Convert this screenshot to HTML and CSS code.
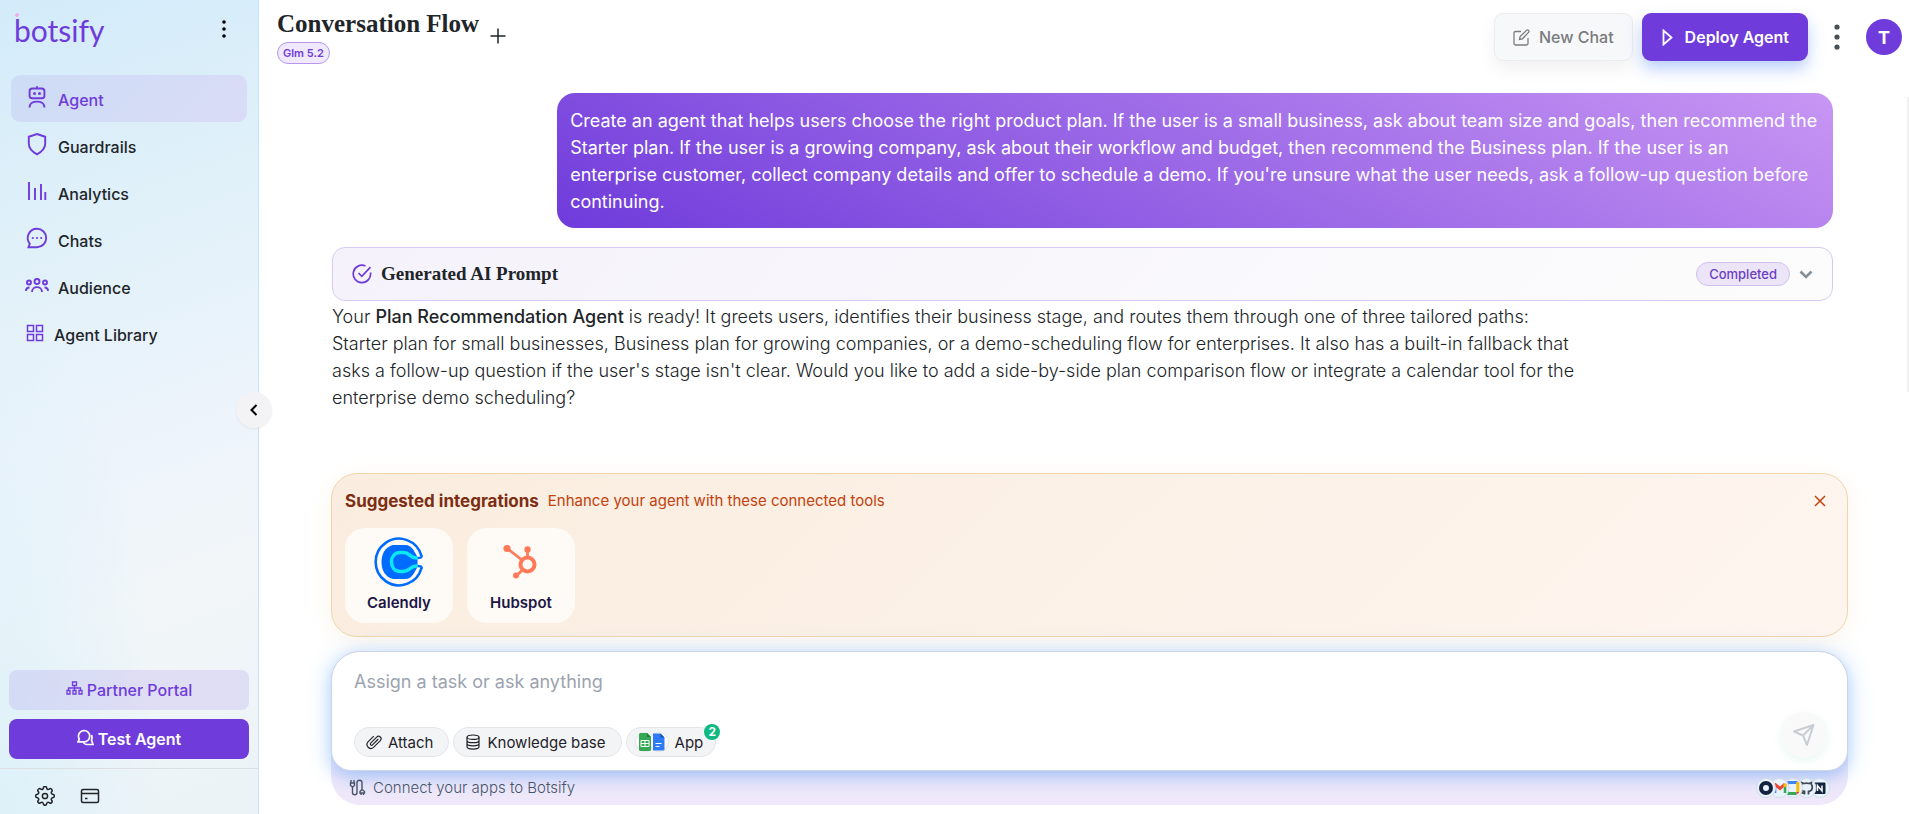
FILE: index.html
```html
<!DOCTYPE html>
<html lang="en">
<head>
    <meta charset="UTF-8">
    <meta name="viewport" content="width=device-width, initial-scale=1.0">
    <title>Conversation Flow</title>
    <link rel="stylesheet" href="styles.css">
</head>
<body>
    <div class="app">
        <aside class="sidebar">
            <div class="brand">
                <a href="#" class="logo">botsify<svg class="spark" width="4" height="4" viewBox="0 0 4 4"><path d="M2 0v4M0 2h4" stroke="#f5a3f0" stroke-width="1.4"/></svg></a>
                <button class="icon-btn" aria-label="Menu">
                    <svg width="4" height="18" viewBox="0 0 4 18"><circle cx="2" cy="2" r="1.8"/><circle cx="2" cy="9" r="1.8"/><circle cx="2" cy="16" r="1.8"/></svg>
                </button>
            </div>

            <nav class="nav">
                <a href="#" class="nav-item active">
                    <svg class="nav-icon" width="24" height="24" viewBox="0 0 24 24"><rect x="4.600" y="3.500" width="14.800" height="9.800" rx="2.600"/><path d="M12 1.300v2M4.600 22.500v-1c1-6.500 13.800-6.500 14.800 0v1"/><circle class="dot" cx="9.500" cy="8.400" r="1.500"/><circle class="dot" cx="14.500" cy="8.400" r="1.500"/></svg>
                    <span>Agent</span>
                </a>
                <a href="#" class="nav-item">
                    <svg class="nav-icon" width="24" height="24" viewBox="0 0 24 24"><path d="M12 2l8.200 2.800v7c0 4.500-3.400 8-8.200 10.500-4.800-2.500-8.200-6-8.200-10.500v-7z"/></svg>
                    <span>Guardrails</span>
                </a>
                <a href="#" class="nav-item">
                    <svg class="nav-icon" width="24" height="24" viewBox="0 0 24 24"><path d="M4 3v18M10 9v12M16 5v16M20.300 13v8"/></svg>
                    <span>Analytics</span>
                </a>
                <a href="#" class="nav-item">
                    <svg class="nav-icon" width="24" height="24" viewBox="0 0 24 24"><path d="M12 2.800a9.200 9.200 0 1 1 0 18.400H3.500l1.300-3.400A9.200 9.200 0 0 1 12 2.800z"/><circle class="dot" cx="7.800" cy="12" r="1.100"/><circle class="dot" cx="12" cy="12" r="1.100"/><circle class="dot" cx="16.200" cy="12" r="1.100"/></svg>
                    <span>Chats</span>
                </a>
                <a href="#" class="nav-item">
                    <svg class="nav-icon" width="24" height="24" viewBox="0 0 24 24"><circle cx="12" cy="8.500" r="2.500"/><circle cx="4" cy="9.500" r="2"/><circle cx="20" cy="9.500" r="2"/><path d="M7 19c0-6.500 10-6.500 10 0M1 18c0-2 1-3.500 3.500-3.500M23 18c0-2-1-3.500-3.500-3.500"/></svg>
                    <span>Audience</span>
                </a>
                <a href="#" class="nav-item library">
                    <svg class="nav-icon" width="20" height="20" viewBox="0 0 20 20"><path d="M2.500 3.500h6v6h-6zM11.500 3.500h6v6h-6zM2.500 12.500h6v6h-6zM11.500 12.500h6v6h-6z"/></svg>
                    <span>Agent Library</span>
                </a>
            </nav>

            <div class="side-actions">
                <button class="side-btn partner">
                    <svg width="17" height="14" viewBox="0 0 17 14"><path d="M6.500 1h4v3.500h-4zM8.500 4.500V9M2.500 9V7h12v2M1 9.500h3v3.500H1zM7 9.500h3v3.500H7zM13 9.500h3v3.500h-3z"/></svg>
                    Partner Portal
                </button>
                <button class="side-btn test">
                    <svg width="17" height="17" viewBox="0 0 17 17"><path d="M7 1.500a5.700 5.700 0 1 1 0 11.400H1l1.300-2.800A5.700 5.700 0 0 1 7 1.500zM14.500 6c1 2.500 0 5 0 5l1.500 4.500h-6c-1.500 0-2.500-.7-3.500-1.800"/></svg>
                    Test Agent
                </button>
            </div>

            <div class="side-footer">
                <button class="icon-btn" aria-label="Settings">
                    <svg width="20" height="20" viewBox="0 0 20 20" class="line"><path d="M8.300 2.200a1.700 1.700 0 0 1 3.400 0c.2 1.300 1.400 1.700 2.400 1a1.700 1.700 0 0 1 2.500 2.500c-.7 1-.2 2.200 1 2.500a1.700 1.700 0 0 1 0 3.500c-1.200.3-1.700 1.500-1 2.500a1.700 1.700 0 0 1-2.500 2.400c-1-.7-2.200-.2-2.400 1a1.700 1.700 0 0 1-3.400 0c-.2-1.200-1.400-1.700-2.400-1a1.700 1.700 0 0 1-2.500-2.400c.7-1 .2-2.200-1-2.500a1.700 1.700 0 0 1 0-3.500c1.200-.3 1.700-1.500 1-2.500a1.700 1.700 0 0 1 2.500-2.500c1 .7 2.200.3 2.400-1z"/><circle cx="10" cy="10" r="2.600"/></svg>
                </button>
                <button class="icon-btn" aria-label="Billing">
                    <svg width="20" height="16" viewBox="0 0 20 16" class="line"><rect x="1.500" y="1.500" width="17" height="13" rx="1.500"/><path d="M1.500 5.500h17M5 10.500h2.500"/></svg>
                </button>
            </div>

            <button class="collapse" aria-label="Collapse sidebar">
                <svg width="8" height="12" viewBox="0 0 8 12"><path d="M6.500 1L1.500 6l5 5"/></svg>
            </button>
        </aside>

        <main class="main">
            <header class="header">
                <div class="title-box">
                    <h1>Conversation Flow</h1>
                    <span class="model">Glm 5.2</span>
                </div>
                <button class="icon-btn plus" aria-label="Add">
                    <svg width="16" height="16" viewBox="0 0 16 16" class="line"><path d="M8 0.500v15M0.500 8h15"/></svg>
                </button>
                <div class="header-actions">
                    <button class="btn new-chat">
                        <svg width="17" height="17" viewBox="0 0 17 17"><path d="M8 2.500H2.500a1.500 1.500 0 0 0-1.500 1.500V14.500A1.500 1.500 0 0 0 2.500 16H13.500a1.500 1.500 0 0 0 1.500-1.500V9M6.500 10.500l.6-3L13.500 1.400a1.300 1.300 0 0 1 2 2L9.500 9.800z"/></svg>
                        New Chat
                    </button>
                    <button class="btn deploy">
                        <svg width="11" height="17" viewBox="0 0 11 17"><path d="M1.500 1.500v14l8-7z"/></svg>
                        Deploy Agent
                    </button>
                    <button class="icon-btn more" aria-label="More">
                        <svg width="6" height="26" viewBox="0 0 6 26"><circle cx="3" cy="3" r="2.600"/><circle cx="3" cy="13" r="2.600"/><circle cx="3" cy="23" r="2.600"/></svg>
                    </button>
                    <button class="avatar">T</button>
                </div>
            </header>

            <section class="chat">
                <p class="bubble">Create an agent that helps users choose the right product plan. If the user is a small business, ask about team size and goals, then recommend the Starter plan. If the user is a growing company, ask about their workflow and budget, then recommend the Business plan. If the user is an enterprise customer, collect company details and offer to schedule a demo. If you're unsure what the user needs, ask a follow-up question before continuing.</p>

                <div class="prompt-card">
                    <svg width="20" height="20" viewBox="0 0 20 20" class="check"><path d="M18.500 8.500A8.700 8.700 0 1 1 13.500 2M6.500 9l3.300 3.300L18.500 3.200"/></svg>
                    <h2>Generated AI Prompt</h2>
                    <span class="status">Completed</span>
                    <button class="icon-btn" aria-label="Expand">
                        <svg width="14" height="9" viewBox="0 0 14 9" class="chevron"><path d="M1.500 1.500L7 7l5.500-5.500"/></svg>
                    </button>
                </div>
                <p class="reply">Your <strong>Plan Recommendation Agent</strong> is ready! It greets users, identifies their business stage, and routes them through one of three tailored paths: Starter plan for small businesses, Business plan for growing companies, or a demo-scheduling flow for enterprises. It also has a built-in fallback that asks a follow-up question if the user's stage isn't clear. Would you like to add a side-by-side plan comparison flow or integrate a calendar tool for the enterprise demo scheduling?</p>
                <div class="scroll-thumb"></div>
            </section>

            <section class="bottom">
                <div class="integrations">
                    <div class="int-head">
                        <h3>Suggested integrations</h3>
                        <span>Enhance your agent with these connected tools</span>
                        <button class="icon-btn close" aria-label="Close">
                            <svg width="12" height="12" viewBox="0 0 12 12"><path d="M1 1l10 10M11 1L1 11"/></svg>
                        </button>
                    </div>
                    <div class="tiles">
                        <button class="tile">
                            <svg width="50" height="50" viewBox="0 0 50 50" fill="none"><path d="M47.500 19A23.300 23.300 0 1 0 47.500 31" stroke="#006bff" stroke-width="2.600"/><path d="M47.500 18.500c.8 2-1 2.500-4 2.500M47.500 31.500c.8-2-1-2.500-4-2.500" stroke="#006bff" stroke-width="2.400"/><path d="M19 8h12c4 0 6.500 2 8.500 5l4 7v10l-4 7c-2 3-4.500 5-8.500 5H19C11 40 7.500 33 7.500 25S11 10 19 8z" fill="#006bff"/><path d="M43.500 21c-7 1-7.500-5.500-14-5.500h-3c-6 0-9 4.300-9 9.500s3 9.500 9 9.500h3c6.500 0 7-6.500 14-5.500" stroke="#0ae8f0" stroke-width="3.400"/></svg>
                            <span>Calendly</span>
                        </button>
                        <button class="tile">
                            <svg width="50" height="50" viewBox="-3 0 50 50" fill="none" stroke="#ff7a59"><circle cx="28.500" cy="27.500" r="7" stroke-width="4"/><path d="M9 12l14 11M28.500 20v-8M23 33.500l-5.500 5" stroke-width="2.800"/><g fill="#ff7a59" stroke="none"><circle cx="8" cy="11.500" r="3.600"/><circle cx="28.500" cy="12.500" r="3.200"/><circle cx="17" cy="38.500" r="3"/></g></svg>
                            <span>Hubspot</span>
                        </button>
                    </div>
                </div>

                <div class="composer-wrap">
                    <div class="composer">
                        <textarea rows="1" aria-label="Message" placeholder="Assign a task or ask anything"></textarea>
                        <div class="tools">
                            <button class="chip">
                                <svg width="16" height="16" viewBox="0 0 16 16" class="line"><path d="M12.300 5L6.500 10.800a1.200 1.200 0 0 1-1.800-1.700l6-6a2.500 2.500 0 0 1 3.600 3.500l-6.800 6.800a3.900 3.900 0 0 1-5.500-5.500l5.800-5.800"/></svg>
                                Attach
                            </button>
                            <button class="chip">
                                <svg width="16" height="16" viewBox="0 0 16 16" class="line"><ellipse cx="8" cy="3.200" rx="6" ry="2.200"/><path d="M2 3.200v9.600c0 3 12 3 12 0V3.200M2 6.400c0 3 12 3 12 0M2 9.600c0 3 12 3 12 0"/></svg>
                                Knowledge base
                            </button>
                            <button class="chip app-chip">
                                <svg width="34" height="20" viewBox="0 0 34 20"><circle cx="10" cy="10" r="9.500" fill="#fff" stroke="#e2e4e8"/><circle cx="24" cy="10" r="9.500" fill="#fff" stroke="#e2e4e8"/><path d="M18 1.500h7.500l4 4V17a1.500 1.500 0 0 1-1.500 1.500H18z" fill="#2f7bf6"/><path d="M25.500 1.500v4h4z" fill="#164fb8"/><path d="M20.500 11.500h6M20.500 14.500h4" stroke="#fff"/><path d="M5.500 1h6.500l4 4v12.500a1.500 1.500 0 0 1-1.500 1.500h-9A1.500 1.500 0 0 1 4 17.500v-15A1.500 1.500 0 0 1 5.500 1z" fill="#34a853"/><path d="M12 1v4h4z" fill="#188038"/><path d="M6 8.500h8v6H6zM10 8.500v6M6 11.500h8" fill="none" stroke="#fff"/></svg>
                                App
                                <span class="count">2</span>
                            </button>
                            <button class="send" aria-label="Send">
                                <svg width="24" height="24" viewBox="0 0 24 24"><path d="M21.500 2L2 8.500l9 4 4 9.500zM21.500 2L11 12.500"/></svg>
                            </button>
                        </div>
                    </div>
                    <div class="connect">
                        <svg width="17" height="17" viewBox="0 0 17 17"><path d="M1.500 4h4v2.500l-2 1.500-2-1.500zM2 1v2.500M5 1v2.500M3.500 8v5.500c0 3 4.500 3 4.500 0v-10c0-3 5-3 5 0V10M11 12.500l2-2 2.500 2V14H11zM12 14.500v1.500M14.500 14.500v1.500"/></svg>
                        <a href="#">Connect your apps to Botsify</a>
                        <svg class="apps" width="74" height="20" viewBox="0 0 74 20">
                            <circle cx="64" cy="10" r="9.500" fill="#e9f3fb" stroke="#cfdcea"/>
                            <rect x="58" y="4.500" width="11.500" height="11.500" rx="1" fill="#13233f"/><path d="M61.500 13V7.500l4.500 5.500V7.500" fill="none" stroke="#fff" stroke-width="1.500"/>
                            <circle cx="50.500" cy="10" r="9.500" fill="#e9f3fb" stroke="#cfdcea"/>
                            <path d="M48.500 16.500v-3c-2.500-.5-3.800-2-3.800-4.300 0-1.400.4-2.200 1-2.800V4.500l2.300 1a8 8 0 0 1 5 0l2.300-1v1.900c.6.600 1 1.400 1 2.800 0 2.300-1.300 3.800-3.800 4.300v3M48.500 15c-2 .5-3-.3-3.500-1.500" fill="none" stroke="#424a59" stroke-width="1.800"/>
                            <circle cx="37" cy="10" r="9.500" fill="#e9f3fb" stroke="#cfdcea"/>
                            <path d="M31.500 4.500h10" stroke="#4285f4" stroke-width="3"/><path d="M41.800 4v10" stroke="#fbbc04" stroke-width="3"/><path d="M31.500 15.500h9" stroke="#34a853" stroke-width="3"/><path d="M32 4v10" stroke="#4285f4" stroke-width="2"/><path d="M40.500 17v-3h3z" fill="#ea4335"/>
                            <circle cx="23.500" cy="10" r="9.500" fill="#e9f3fb" stroke="#cfdcea"/>
                            <path d="M19 6v9" stroke="#4285f4" stroke-width="2.600"/><path d="M29 6v9" stroke="#34a853" stroke-width="2.600"/><path d="M18.500 6l5.500 4.500L29 6" fill="none" stroke="#ea4335" stroke-width="3"/><path d="M27.500 5.500h3v3.500h-3z" fill="#fbbc04"/>
                            <circle cx="10" cy="10" r="9.500" fill="#e9f3fb" stroke="#cfdcea"/>
                            <circle cx="10" cy="10" r="5" fill="none" stroke="#13233f" stroke-width="4"/>
                        </svg>
                    </div>
                </div>
            </section>
        </main>
    </div>
</body>
</html>
```
FILE: styles.css
```css
* {
    box-sizing: border-box;
}

body {
    margin: 0;
    font-family: Inter, "Open Sans", sans-serif;
    font-size: 16px;
    color: #212529;
    background-color: #fff;
}

button {
    font-family: inherit;
    cursor: pointer;
}

a {
    color: inherit;
    text-decoration: none;
}

h1, h2, h3, p {
    margin: 0;
}

svg {
    flex: none;
    display: block;
}

.line {
    fill: none;
    stroke: #212529;
    stroke-width: 1.5;
}

.icon-btn {
    display: flex;
    align-items: center;
    justify-content: center;
    padding: 0;
    border: none;
    background: none;
}

.app {
    display: flex;
    min-height: 100vh;
}

/* Sidebar */
.sidebar {
    position: relative;
    display: flex;
    flex-direction: column;
    flex: none;
    width: 259px;
    border-right: 1px solid #bfe6fb;
    background:
        radial-gradient(ellipse at 0% 105%, rgba(218, 240, 249, 0.9), rgba(218, 240, 249, 0) 45%),
        linear-gradient(160deg, #d3ebfa 0%, #e1f1f9 30%, #ebf3fb 50%, #f2f6f9 72%, #ebf3f7 100%);
}

.brand {
    display: flex;
    justify-content: space-between;
    height: 75px;
    padding: 12px 32px 0 14px;
}

.brand .icon-btn {
    height: 34px;
}

.logo {
    position: relative;
    font-family: Lato, sans-serif;
    font-size: 30px;
    line-height: 36px;
    color: #6f3bdb;
}

.spark {
    position: absolute;
    top: 1px;
    left: 1px;
}

.nav {
    padding: 0 11px;
}

.nav-item {
    display: flex;
    align-items: center;
    gap: 9px;
    height: 47px;
    padding: 2px 15px 0 14px;
    border-radius: 9px;
    font-weight: 500;
}

.nav-item.active {
    color: #6f3bdb;
    background: linear-gradient(135deg, #cddcf5, #dadcf7);
}

.nav-icon {
    margin-bottom: 6px;
    fill: none;
    stroke: #6f3bdb;
    stroke-width: 1.9;
}

.nav-icon .dot {
    fill: #6f3bdb;
    stroke: none;
}

.nav-item.library .nav-icon {
    stroke-width: 1.5;
}

.side-actions {
    display: flex;
    flex-direction: column;
    gap: 9px;
    margin-top: auto;
    padding: 0 9px 9px;
}

.side-btn {
    display: flex;
    align-items: center;
    justify-content: center;
    gap: 4px;
    height: 40px;
    border: none;
    border-radius: 8px;
    font-size: 16px;
    font-weight: 500;
}

.side-btn svg {
    margin-bottom: 4px;
    fill: none;
    stroke: currentColor;
    stroke-width: 1.3;
}

.partner {
    color: #6f3bdb;
    background-color: rgba(111, 59, 219, 0.12);
}

.test {
    font-weight: 600;
    color: #fff;
    background-color: #6f3bdb;
}

.test svg {
    stroke-width: 1.7;
}

.side-footer {
    display: flex;
    align-items: center;
    gap: 25px;
    height: 46px;
    padding: 9px 35px 0;
    border-top: 1px solid #dcdfe2;
}

.collapse {
    position: absolute;
    top: 392px;
    right: -14px;
    display: flex;
    align-items: center;
    justify-content: center;
    width: 36px;
    height: 36px;
    padding: 0;
    border: none;
    border-radius: 50%;
    background-color: #f3f3f5;
    box-shadow: 0 1px 2px rgba(0, 0, 0, 0.06);
}

.collapse svg {
    fill: none;
    stroke: #000;
    stroke-width: 2;
}

/* Main column */
.main {
    display: flex;
    flex-direction: column;
    flex: 1;
    min-width: 0;
}

.header {
    display: flex;
    align-items: flex-start;
    padding: 10px 7px 0 18px;
}

.title-box {
    display: flex;
    flex-direction: column;
    align-items: flex-start;
    gap: 4px;
}

h1, h2 {
    font-family: "Liberation Serif", serif;
    font-weight: 700;
}

h1 {
    font-size: 25px;
    line-height: 28px;
}

.model {
    padding: 0 5px;
    border: 1px solid #b597ee;
    border-radius: 11px;
    background-color: #f0e9fc;
    font-size: 11px;
    line-height: 20px;
    font-weight: 600;
    color: #6f3bdb;
}

.plus {
    margin: 18px 0 0 11px;
}

.header-actions {
    display: flex;
    align-items: center;
    margin: 3px 0 0 auto;
}

.btn {
    display: flex;
    align-items: center;
    height: 48px;
    border-radius: 9px;
    font-size: 16px;
    font-weight: 500;
}

.btn svg {
    fill: none;
    stroke: currentColor;
    stroke-width: 1.3;
}

.new-chat {
    gap: 9px;
    margin-right: 9px;
    padding: 0 18px;
    border: 1px solid #ececee;
    background-color: #f7f8fa;
    color: #7b7b7d;
    box-shadow: 0 8px 18px rgba(0, 0, 0, 0.06);
}

.deploy {
    gap: 12px;
    padding: 0 19px 0 20px;
    border: none;
    background-color: #6f3bdb;
    font-weight: 600;
    color: #fff;
    box-shadow: 0 8px 16px rgba(59, 118, 246, 0.35);
}

.deploy svg {
    stroke-width: 1.8;
}

.more {
    margin: 0 26px;
    fill: #495057;
}

.avatar {
    width: 36px;
    height: 36px;
    padding: 0;
    border: none;
    border-radius: 50%;
    background-color: #6f3bdb;
    font-size: 18px;
    font-weight: 700;
    color: #fff;
}

/* Conversation */
.chat {
    position: relative;
    display: flex;
    flex-direction: column;
    flex: 1;
    padding: 29px 76px 0 73px;
}

.bubble {
    align-self: flex-end;
    max-width: 85%;
    padding: 14px 13px 13px;
    border-radius: 18px;
    background: linear-gradient(25deg, #6f3bdb 0%, #c896f3 100%);
    font-size: 18px;
    line-height: 27px;
    color: #fff;
}

.prompt-card {
    display: flex;
    align-items: center;
    gap: 9px;
    height: 54px;
    margin-top: 19px;
    padding: 0 19px;
    border: 1px solid #d6c9f3;
    border-radius: 13px;
    background: linear-gradient(135deg, #f5f2fb, #fcfcfc);
}

.check {
    fill: none;
    stroke: #6f3bdb;
    stroke-width: 1.7;
}

h2 {
    font-size: 19px;
    line-height: 26px;
}

.status {
    margin-left: auto;
    padding: 0 12px;
    border: 1px solid #d0c0ef;
    border-radius: 12px;
    background-color: #ece5f8;
    font-size: 13px;
    line-height: 22px;
    font-weight: 500;
    color: #6a3dc4;
}

.chevron {
    fill: none;
    stroke: #868e96;
    stroke-width: 2.6;
}

.reply {
    max-width: 1252px;
    padding-top: 2px;
    font-size: 18px;
    line-height: 27px;
    font-weight: 300;
}

.reply strong {
    font-weight: 500;
}

.scroll-thumb {
    position: absolute;
    top: 33px;
    right: 0;
    width: 2px;
    height: 295px;
    background-color: #f1f1f1;
}

/* Integrations and composer */
.bottom {
    padding: 0 61px 9px 72px;
}

.integrations {
    padding: 13px;
    border: 1px solid #f3d3ac;
    border-radius: 26px;
    background: linear-gradient(135deg, #faeddf, #fef5ef);
    box-shadow: 0 4px 22px rgba(240, 170, 90, 0.12);
}

.int-head {
    display: flex;
    align-items: center;
    gap: 9px;
    line-height: 28px;
    color: #c2410c;
}

.int-head h3 {
    font-size: 17px;
    font-weight: 700;
    color: #7c2d12;
}

.int-head span {
    font-size: 15px;
}

.close {
    margin: 0 8px 0 auto;
    fill: none;
    stroke: #c2410c;
    stroke-width: 1.5;
}

.tiles {
    display: flex;
    gap: 14px;
    margin-top: 13px;
}

.tile {
    display: flex;
    flex-direction: column;
    align-items: center;
    gap: 6px;
    width: 108px;
    height: 95px;
    padding: 9px 0 0;
    border: none;
    border-radius: 20px;
    background-color: #fefaf5;
    font-size: 15px;
    line-height: 20px;
    font-weight: 600;
    color: #1b1646;
}

.composer-wrap {
    margin-top: 14px;
    border-radius: 29px;
    background-color: #efe8fa;
}

.composer {
    padding: 16px 20px 12px 22px;
    border: 1px solid #ccd6e4;
    border-radius: 29px 29px 20px 20px;
    background-color: #fff;
    box-shadow: 0 2px 24px rgba(59, 150, 246, 0.3), 0 6px 14px rgba(59, 130, 246, 0.22);
}

.composer textarea {
    display: block;
    width: 100%;
    height: 27px;
    padding: 0;
    border: none;
    outline: none;
    resize: none;
    background: none;
    font-family: inherit;
    font-size: 18px;
    line-height: 27px;
}

.composer textarea::placeholder {
    color: #9ca3af;
}

.tools {
    display: flex;
    align-items: flex-end;
    gap: 4px;
    margin-top: 17px;
}

.chip {
    position: relative;
    display: flex;
    align-items: center;
    gap: 6px;
    height: 30px;
    margin-bottom: 1px;
    padding: 0 15px 0 11px;
    border: 1px solid #e4e6ea;
    border-radius: 15px;
    background-color: #f3f4f6;
    font-size: 15px;
    color: #1f2329;
}

.chip .line {
    stroke-width: 1.2;
}

.app-chip {
    padding: 0 12px 0 8px;
}

.count {
    position: absolute;
    top: -4px;
    right: -5px;
    width: 16px;
    border-radius: 8px;
    background-color: #10b981;
    font-size: 12px;
    line-height: 16px;
    font-weight: 700;
    color: #fff;
}

.send {
    display: flex;
    align-items: center;
    justify-content: center;
    width: 46px;
    height: 46px;
    margin-left: auto;
    padding: 0;
    border: none;
    border-radius: 50%;
    background-color: #f9f9fa;
    box-shadow: 0 3px 9px rgba(16, 185, 129, 0.1);
}

.send svg {
    fill: none;
    stroke: #c9cdd4;
    stroke-width: 2;
    stroke-linejoin: round;
}

.connect {
    display: flex;
    align-items: center;
    gap: 7px;
    height: 34px;
    padding: 0 18px 1px;
    font-size: 15px;
    font-weight: 300;
    color: #475569;
    fill: none;
    stroke: #475569;
    stroke-width: 1.4;
}

.connect a {
    stroke: none;
}

.connect .apps {
    margin-left: auto;
    stroke: none;
    stroke-width: 1;
}
```
